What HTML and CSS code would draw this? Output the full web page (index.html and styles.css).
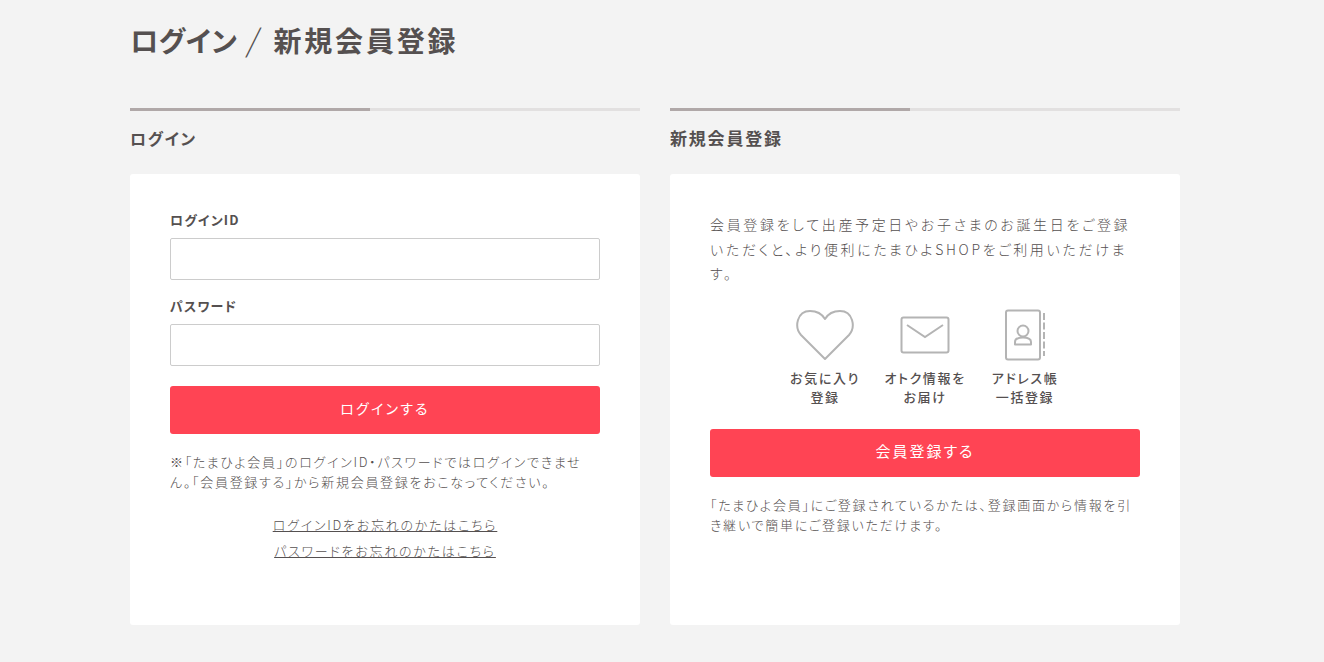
FILE: index.html
```html
<!DOCTYPE html>
<html lang="ja">

<head>
    <meta charset="UTF-8">
    <meta name="viewport" content="width=device-width, initial-scale=1.0">
    <title>ログイン / 新規会員登録</title>
    <link rel="stylesheet" href="styles.css">
</head>

<body>
    <main class="wrap">
        <h1 class="page-title"><span class="title-kana">ログイン</span><span class="slash">/</span><span class="title-kanji">新規会員登録</span></h1>

        <div class="columns">

            <section class="col">
                <div class="rule"><span></span></div>
                <h2 class="col-title">ログイン</h2>
                <div class="card">
                    <label class="label" for="login-id">ログインID</label>
                    <input class="field" id="login-id" type="text">
                    <label class="label label-second" for="login-pass">パスワード</label>
                    <input class="field" id="login-pass" type="password">
                    <a class="btn btn-login" href="#">ログインする</a>
                    <p class="note note-login">※「たまひよ会員」のログインID・パスワードではログインできません。「会員登録する」から新規会員登録をおこなってください。</p>
                    <ul class="links">
                        <li><a href="#">ログインIDをお忘れのかたはこちら</a></li>
                        <li><a href="#">パスワードをお忘れのかたはこちら</a></li>
                    </ul>
                </div>
            </section>

            <section class="col">
                <div class="rule"><span></span></div>
                <h2 class="col-title col-title-kanji">新規会員登録</h2>
                <div class="card">
                    <p class="lead">会員登録をして出産予定日やお子さまのお誕生日をご登録いただくと、より便利にたまひよSHOPをご利用いただけます。</p>
                    <ul class="merits">
                        <li>
                            <svg class="icon" width="60" height="52" viewBox="0 0 60 52" fill="none" stroke="#b4b4b4" stroke-width="2">
                                <path d="M30 50 L6 26 C-1 18 2 2 15 2 C22 2 27 5 30 10 C33 5 38 2 45 2 C58 2 61 18 54 26 Z" stroke-linejoin="round"/>
                            </svg>
                            <span>お気に入り<br>登録</span>
                        </li>
                        <li>
                            <svg class="icon" width="50" height="38" viewBox="0 0 50 38" fill="none" stroke="#b4b4b4" stroke-width="2">
                                <rect x="1.5" y="1.5" width="47" height="35" rx="2"/>
                                <path d="M7 9 L25 21 L43 9"/>
                            </svg>
                            <span>オトク情報を<br>お届け</span>
                        </li>
                        <li>
                            <svg class="icon" width="42" height="52" viewBox="0 0 42 52" fill="none" stroke="#b4b4b4" stroke-width="2">
                                <rect x="2" y="1.500" width="34" height="49" rx="2"/>
                                <circle cx="19" cy="22" r="5.500"/>
                                <path d="M11 35.500 V33 C11 30 14 28.500 19 28.500 C24 28.500 27 30 27 33 V35.500 Z" stroke-linejoin="round"/>
                                <path d="M40 4 V47" stroke-dasharray="7 2.500"/>
                            </svg>
                            <span>アドレス帳<br>一括登録</span>
                        </li>
                    </ul>
                    <a class="btn btn-signup" href="#">会員登録する</a>
                    <p class="note note-signup">「たまひよ会員」にご登録されているかたは、登録画面から情報を引き継いで簡単にご登録いただけます。</p>
                </div>
            </section>

        </div>
    </main>
</body>

</html>
```

FILE: styles.css
```css
* {
    margin: 0;
    padding: 0;
    box-sizing: border-box;
}

body {
    background-color: #f3f3f3;
    color: #555050;
    font-family: "Noto Sans CJK JP", "Noto Sans", sans-serif;
    font-feature-settings: "palt";
    letter-spacing: 1.6px;
}

.wrap {
    width: 1050px;
    margin-left: 130px;
    padding-top: 18px;
    padding-bottom: 37px;
}

.page-title {
    display: flex;
    align-items: center;
    height: 44px;
    font-size: 28px;
    font-weight: 700;
}

.title-kana {
    letter-spacing: 0.4px;
}

.title-kanji {
    letter-spacing: 2.8px;
}

.slash {
    display: inline-block;
    margin: 0 13px 3px 11px;
    font-size: 31px;
    font-weight: 300;
    letter-spacing: 0;
    transform: skewX(-9deg);
}

.columns {
    display: flex;
    gap: 30px;
    margin-top: 46px;
}

.col {
    width: 510px;
}

.rule {
    height: 3px;
    background-color: #e2e0e0;
}

.rule span {
    display: block;
    width: 240px;
    height: 3px;
    background-color: #b0a8a8;
}

.col-title {
    font-size: 16px;
    line-height: 24px;
    font-weight: 700;
    margin-top: 15px;
}

.col-title-kanji {
    font-size: 17px;
    letter-spacing: 1.8px;
}

.card {
    height: 451px;
    margin-top: 24px;
    padding: 36px 40px 0;
    background-color: #fff;
    border-radius: 3px;
}

.label {
    display: block;
    font-size: 13px;
    line-height: 20px;
    font-weight: 700;
    letter-spacing: 1.2px;
}

.label-second {
    margin-top: 16px;
}

.field {
    display: block;
    width: 100%;
    height: 42px;
    margin-top: 8px;
    border: 1px solid #ccc;
    border-radius: 2px;
    background-color: #fff;
}

.btn {
    display: block;
    height: 48px;
    line-height: 44px;
    background-color: #ff4454;
    border-radius: 3px;
    color: #fff;
    font-size: 14px;
    text-align: center;
    text-decoration: none;
}

.btn-login {
    margin-top: 20px;
    letter-spacing: 2.2px;
}

.btn-signup {
    margin-top: 22px;
    font-size: 15px;
    letter-spacing: 2px;
}

.note {
    font-size: 13px;
    line-height: 20px;
    font-weight: 300;
}

.note-login {
    max-width: 420px;
    margin-top: 18px;
    letter-spacing: 1.7px;
}

.note-signup {
    margin-top: 18px;
    letter-spacing: 1.75px;
}

.links {
    list-style: none;
    margin-top: 20px;
    text-align: center;
    font-size: 13px;
    line-height: 26px;
    font-weight: 300;
    letter-spacing: 1.76px;
}

.links a {
    color: #555050;
}

.lead {
    margin-top: 2px;
    font-size: 14px;
    line-height: 24.500px;
    font-weight: 300;
    letter-spacing: 2.65px;
}

.merits {
    display: flex;
    justify-content: center;
    gap: 24px;
    list-style: none;
    margin-top: 23px;
}

.merits li {
    width: 76px;
    display: flex;
    flex-direction: column;
    align-items: center;
    text-align: center;
    font-size: 13px;
    line-height: 19.500px;
    font-weight: 500;
    white-space: nowrap;
}

.icon {
    height: 52px;
    margin-bottom: 7px;
}
```
